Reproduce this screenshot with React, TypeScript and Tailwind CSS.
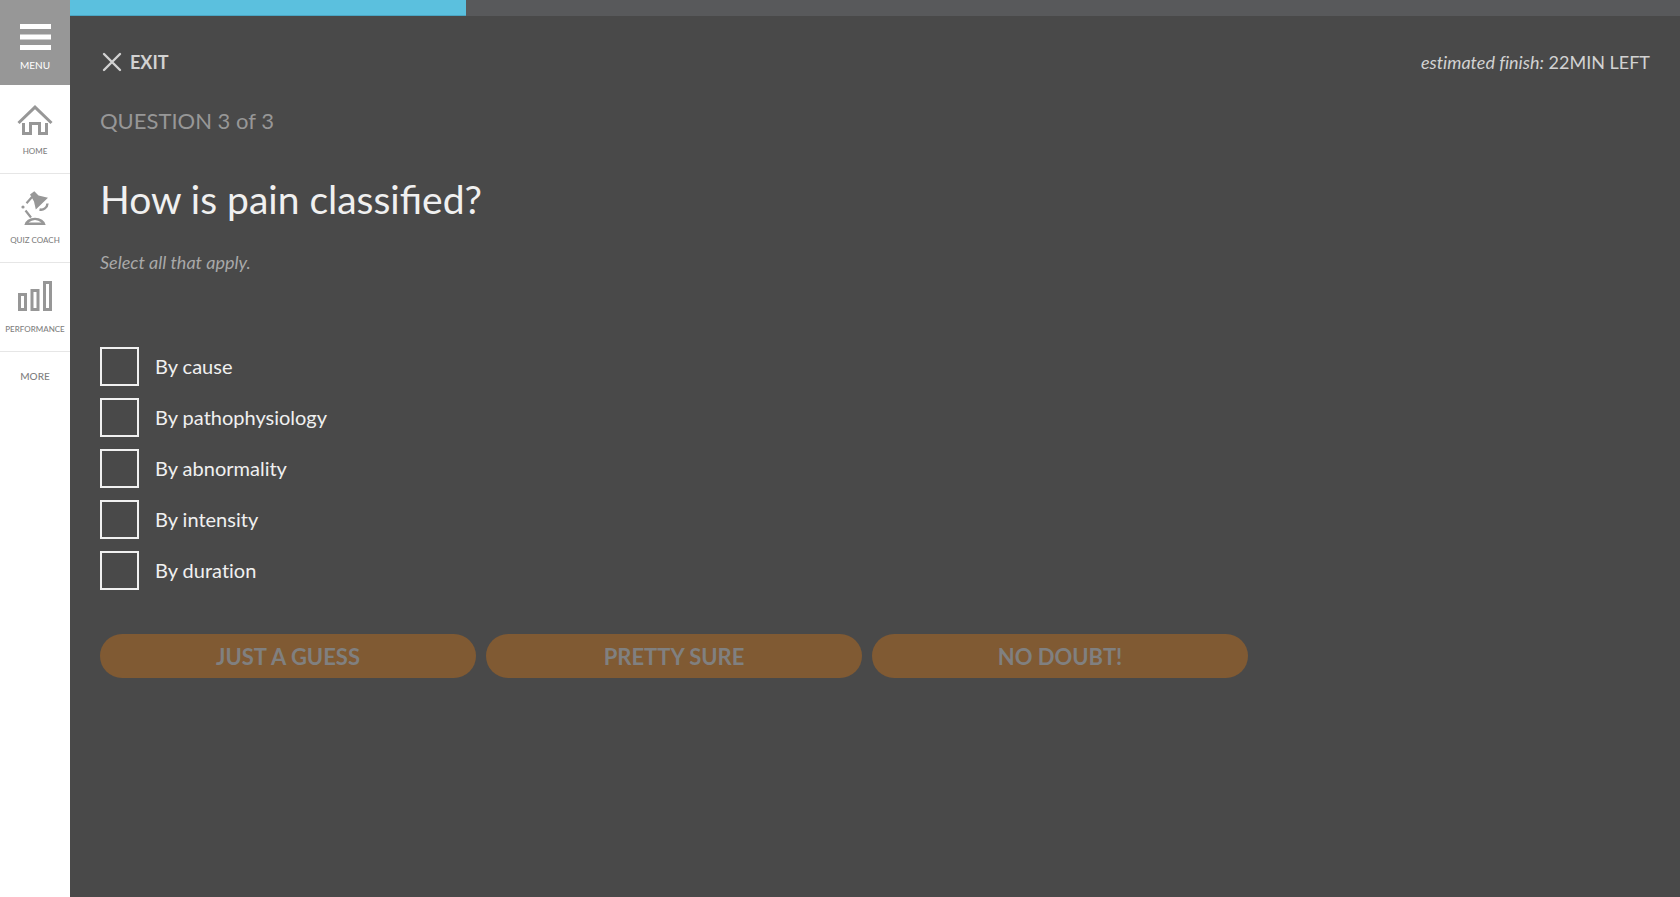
import type { ReactNode } from "react";

const answers = ["By cause", "By pathophysiology", "By abnormality", "By intensity", "By duration"];
const confidence = ["JUST A GUESS", "PRETTY SURE", "NO DOUBT!"];

function HomeIcon() {
  return (
    <svg className="h-9 w-9" viewBox="0 0 36 36" fill="none" stroke="#979797" strokeWidth="3" aria-hidden="true">
      <path d="M1.500 22 18 6.200 34.500 22" />
      <path d="M6.500 22V32.500H13.500V22.500H22.500V32.500H29.500V22" />
    </svg>
  );
}

function LampIcon() {
  return (
    <svg className="h-9 w-9" viewBox="0 0 36 36" aria-hidden="true">
      <path d="M13 4.500 17.300 1.200 21.500 5.600 31 7.800 18.800 19.500 17 11.500Z" fill="#979797" />
      <path d="M15 7 9.500 13.200M8.500 20.500 14 27.500" stroke="#979797" strokeWidth="2.200" fill="none" />
      <circle cx="6" cy="17" r="1.600" fill="#979797" />
      <path d="M30.500 13.500A6.500 6.500 0 0 1 22.500 19.500" stroke="#979797" strokeWidth="2.400" fill="none" />
      <path d="M7.300 35A10.800 8.500 0 0 1 28.700 35Z" fill="#979797" />
      <path d="M11.500 32.500Q18 27.500 24.500 32.500Z" fill="#fff" />
    </svg>
  );
}

function BarsIcon() {
  return (
    <svg className="h-9 w-9" viewBox="0 0 36 36" fill="none" stroke="#979797" strokeWidth="3" aria-hidden="true">
      <path d="M2.500 15.500H8.500V30.500H2.500ZM15 11.500H21V30.500H15ZM27.500 3.500H33.500V30.500H27.500Z" />
    </svg>
  );
}

function NavItem({ label, children }: { label: string; children: ReactNode }) {
  return (
    <a href="#" className="flex h-[89px] flex-col items-center border-b border-[#e6e6e6] pt-4 text-[8px] leading-3 font-medium text-[#808080]">
      {children}
      <span className="mt-2 whitespace-nowrap">{label}</span>
    </a>
  );
}

export default function App() {
  return (
    <div className="flex min-h-screen bg-[#494949] font-['Lato','Open_Sans',sans-serif]">
      <nav className="w-[70px] shrink-0 bg-white">
        <button type="button" className="flex h-[85px] w-full flex-col items-center bg-[#979797] pt-6 text-[10px] leading-3 text-white">
          <svg className="h-[26px] w-[31px]" viewBox="0 0 31 26" fill="#fff" aria-hidden="true">
            <path d="M0 0H31V5H0ZM0 10.500H31V15.500H0ZM0 21H31V26H0Z" />
          </svg>
          <span className="mt-[9px]">MENU</span>
        </button>
        <NavItem label="HOME"><HomeIcon /></NavItem>
        <NavItem label="QUIZ COACH"><LampIcon /></NavItem>
        <NavItem label="PERFORMANCE"><BarsIcon /></NavItem>
        <a href="#" className="block pt-[18px] text-center text-[10px] leading-3 font-medium text-[#808080]">MORE</a>
      </nav>

      <div className="min-w-0 flex-1">
        <div className="h-4 bg-[#58595b]" role="progressbar" aria-label="Quiz progress" aria-valuenow={25}>
          <div className="h-full w-[24.6%] border-b border-[#4ba6c4] bg-[#5bc0de]" />
        </div>

        <main className="px-[30px] pt-8">
          <div className="flex items-center justify-between leading-7 text-[#d2d2d2]">
            <button type="button" className="flex items-center gap-1.5 text-lg font-bold">
              <svg className="h-6 w-6" viewBox="0 0 24 24" fill="none" stroke="currentColor" strokeWidth="2.400" strokeLinecap="round" aria-hidden="true">
                <path d="M4 4 20 20M20 4 4 20" />
              </svg>
              EXIT
            </button>
            <p className="text-lg leading-7"><em className="[font-variant-ligatures:none]">estimated finish:</em> 22MIN LEFT</p>
          </div>

          <p className="mt-[31px] text-[22px] leading-7 text-[#979797]">QUESTION 3 of 3</p>
          <h1 className="mt-[39px] text-[39px] leading-[50px] text-[#f0f0f0]">How is pain classified?</h1>
          <p className="mt-6 text-lg leading-7 text-[#a8a8a8] italic">Select all that apply.</p>

          <div className="mt-[71px] flex flex-col gap-3">
            {answers.map((answer) => (
              <label key={answer} className="flex items-center gap-4 self-start text-xl text-[#f0f0f0] [font-variant-ligatures:none]">
                <input type="checkbox" className="size-[39px] appearance-none border-2 border-[#f0f0f0] checked:bg-[#5bc0de]" />
                <span className="pb-0.5">{answer}</span>
              </label>
            ))}
          </div>

          <div className="mt-11 grid max-w-[1148px] grid-cols-3 gap-[10px]">
            {confidence.map((text) => (
              <button key={text} type="button" disabled className="h-11 rounded-full bg-[#805a33] text-[22px] font-bold text-[#808080]">
                {text}
              </button>
            ))}
          </div>
        </main>
      </div>
    </div>
  );
}
